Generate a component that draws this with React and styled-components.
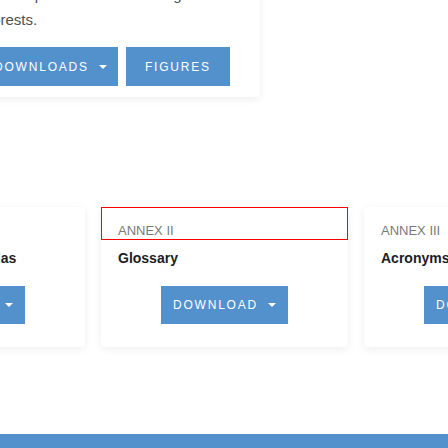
import styled, { createGlobalStyle } from 'styled-components';

const GlobalStyle = createGlobalStyle`
  html, body {
    margin: 0;
    padding: 0;
    background: #ffffff;
    overflow: hidden;
  }
  body {
    font-family: "Liberation Sans", Arial, sans-serif;
  }
`;

const annexes = [
  { label: 'ANNEX I', title: 'Global to Regional Atlas' },
  { label: 'ANNEX II', title: 'Glossary', outlined: true },
  { label: 'ANNEX III', title: 'Acronyms' },
];

function App() {
  return (
    <Page>
      <GlobalStyle />
      <TopCard>
        <Intro>
          for adaptation and increasing climate
          <br />
          forests.
        </Intro>
        <ButtonRow>
          <BlueButton $dropdown>
            Downloads
            <Caret />
          </BlueButton>
          <BlueButton>Figures</BlueButton>
        </ButtonRow>
      </TopCard>

      <CardRow>
        {annexes.map((a) => (
          <AnnexCard key={a.label}>
            <CardHeader $outlined={a.outlined}>
              <AnnexLabel>{a.label}</AnnexLabel>
            </CardHeader>
            <AnnexTitle>{a.title}</AnnexTitle>
            <CardButton>
              Download
              <Caret />
            </CardButton>
          </AnnexCard>
        ))}
      </CardRow>

      <FooterBar />
    </Page>
  );
}

export default App;

const Page = styled.div`
  width: 448px;
  height: 448px;
  overflow: hidden;
`;

const TopCard = styled.div`
  box-sizing: border-box;
  width: 300px;
  margin: -40px 0 0 -40px;
  padding: 22px 0 11px 23px;
  background: #fff;
  border-radius: 4px;
  box-shadow: 0 2px 8px rgba(0, 0, 0, 0.07);
`;

const Intro = styled.p`
  margin: 0;
  padding-left: 5px;
  font-size: 15px;
  line-height: 25px;
  color: #505050;
  white-space: nowrap;
`;

const ButtonRow = styled.div`
  display: flex;
  gap: 8px;
  margin-top: 15px;
`;

const BlueButton = styled.button`
  display: flex;
  align-items: center;
  height: 39px;
  padding: ${(p) => (p.$dropdown ? '0 11px' : '0 19px')};
  border: none;
  border-radius: 0;
  background: #5391cd;
  color: #fff;
  font-family: "Liberation Sans", Arial, sans-serif;
  font-size: 12px;
  letter-spacing: 1.8px;
  text-transform: uppercase;
`;

const Caret = styled.span`
  display: inline-block;
  width: 0;
  height: 0;
  margin-left: 10px;
  border-left: 4px solid transparent;
  border-right: 4px solid transparent;
  border-top: 4px solid #fff;
`;

const CardRow = styled.div`
  display: flex;
  gap: 16px;
  margin: 110px 0 0 -162px;
`;

const AnnexCard = styled.div`
  flex: 0 0 247px;
  box-sizing: border-box;
  padding-bottom: 23px;
  background: #fff;
  border-radius: 4px;
  box-shadow: 0 2px 9px rgba(0, 0, 0, 0.07);
  display: flex;
  flex-direction: column;
`;

const CardHeader = styled.div`
  box-sizing: border-box;
  height: 33px;
  padding: 0 16px;
  display: flex;
  align-items: flex-end;
  border: 1px solid ${(p) => (p.$outlined ? '#ff0000' : 'transparent')};
`;

const AnnexLabel = styled.span`
  font-size: 13px;
  line-height: 16px;
  color: #7a7a7a;
`;

const AnnexTitle = styled.h3`
  margin: 9px 0 0;
  padding: 0 17px;
  font-size: 14px;
  line-height: 18px;
  font-weight: 700;
  color: #1c1c28;
  white-space: nowrap;
`;

const CardButton = styled(BlueButton)`
  align-self: center;
  justify-content: center;
  box-sizing: border-box;
  width: 127px;
  height: 38px;
  margin-top: 19px;
  padding: 0;
`;

const FooterBar = styled.div`
  height: 20px;
  margin-top: 87px;
  background: #5391cd;
`;
